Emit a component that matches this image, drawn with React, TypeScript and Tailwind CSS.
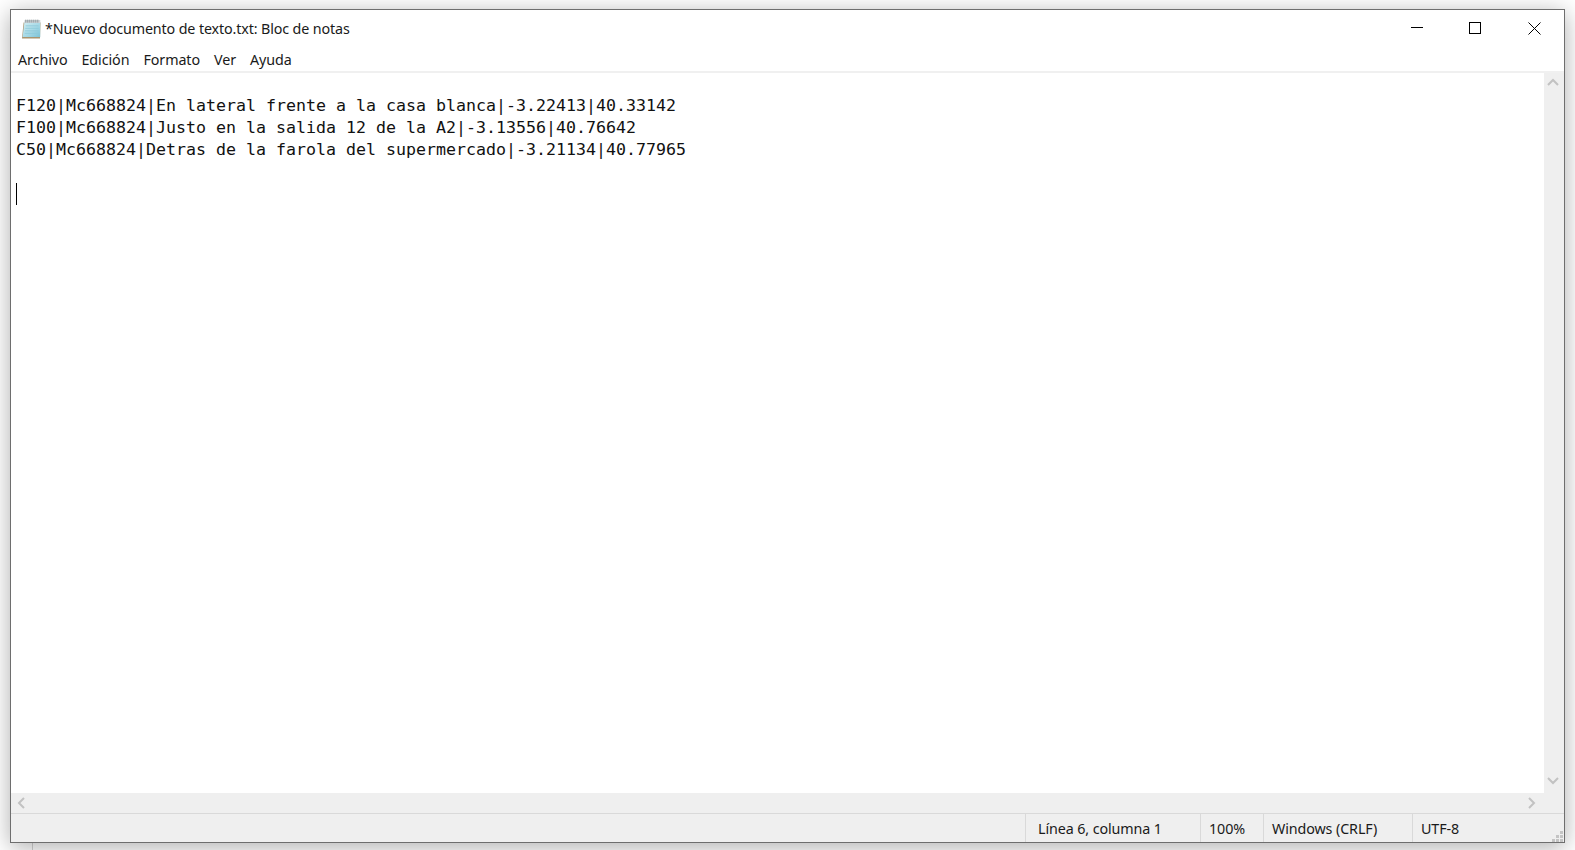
const ui = "font-['Noto_Sans','Open_Sans',sans-serif]";

const lines = [
  "",
  "F120|Mc668824|En lateral frente a la casa blanca|-3.22413|40.33142",
  "F100|Mc668824|Justo en la salida 12 de la A2|-3.13556|40.76642",
  "C50|Mc668824|Detras de la farola del supermercado|-3.21134|40.77965",
  "",
];

const menu = ["Archivo", "Edición", "Formato", "Ver", "Ayuda"];

const NotepadIcon = () => (
  <svg width="20" height="20" viewBox="0 0 20 20">
    <defs>
      <linearGradient id="page" x1="0" y1="0" x2="1" y2="1">
        <stop offset="0" stopColor="#d3eef3" />
        <stop offset="0.55" stopColor="#a6d9e6" />
        <stop offset="1" stopColor="#7cc3d6" />
      </linearGradient>
    </defs>
    <path d="M2.6 3.5H19.5L19 19.5H1z" fill="#a8946f" />
    <path d="M3.4 3H19.2V18H1.6z" fill="url(#page)" />
    <path d="M4.6 6.8h13M4.3 9.3h13.3M4 11.8h13.6M3.7 14.3h13.9" stroke="#8cc8d8" strokeWidth="0.8" />
    <path d="M3.6 1H19.3V4H3.3z" fill="#cfd6d9" />
    <path
      d="M4.8 0.6v3M6.8 0.6v3M8.8 0.6v3M10.8 0.6v3M12.8 0.6v3M14.8 0.6v3M16.8 0.6v3"
      stroke="#7d898e"
      strokeWidth="0.8"
    />
  </svg>
);

const Chevron = ({ d }: { d: string }) => (
  <svg width="12" height="12" viewBox="0 0 12 12" className="text-[#c2c2c2]">
    <path d={d} fill="none" stroke="currentColor" strokeWidth="2" />
  </svg>
);

const Grip = () => (
  <svg width="12" height="12" viewBox="0 0 12 12" className="absolute bottom-0 right-0">
    <path
      d="M8 1h3v3H8zM4 5h3v3H4zM8 5h3v3H8zM0 9h3v3H0zM4 9h3v3H4zM8 9h3v3H8z"
      fill="#c4c4c4"
    />
  </svg>
);

const StatusCell = ({ text, className }: { text: string; className: string }) => (
  <div className={`flex h-full items-center border-l border-[#d9d9d9] pl-2 pt-[2px] ${className}`}>{text}</div>
);

export default function App() {
  return (
    <div className="relative h-[850px] w-[1575px] overflow-hidden bg-white pl-[10px] pt-[9px]">
      {/* edge of whatever sits behind the window */}
      <div className="absolute bottom-0 left-[32px] h-[8px] w-px bg-[#d4d4d4]" />
      <div
        className={`relative flex h-[834px] w-[1555px] flex-col border border-[#6e6e6e] bg-white text-[14.3px] text-[#1a1a1a] shadow-[0_4px_22px_rgba(0,0,0,0.32)] ${ui}`}
      >
        <div className="flex h-[38px] items-center">
          <div className="ml-[10px] mr-[4px] flex">
            <NotepadIcon />
          </div>
          <span className="flex-1 tracking-[-0.13px]">*Nuevo documento de texto.txt: Bloc de notas</span>
          <div className="flex h-full pb-[2px]">
            <button className="flex w-[59px] items-center justify-center">
              <svg width="12" height="12" viewBox="0 0 12 12">
                <path d="M0 5.5h12" stroke="#000" />
              </svg>
            </button>
            <button className="flex w-[59px] items-center justify-center pr-[2px]">
              <svg width="12" height="12" viewBox="0 0 12 12">
                <rect x="0.5" y="0.5" width="11" height="11" fill="none" stroke="#000" />
              </svg>
            </button>
            <button className="flex w-[59px] items-center justify-center">
              <svg width="13" height="13" viewBox="0 0 13 13">
                <path d="M0.5 0.5l12 12M12.5 0.5l-12 12" stroke="#000" />
              </svg>
            </button>
          </div>
        </div>

        <div className="box-content flex h-[23px] items-center gap-[14px] border-b-2 border-[#f0f0f0] pl-[7px] tracking-[-0.08px]">
          {menu.map((item) => (
            <span key={item}>{item}</span>
          ))}
        </div>

        <div className="flex min-h-0 flex-1">
          <div className="relative flex-1 overflow-hidden pl-[5px] font-['DejaVu_Sans_Mono',monospace] text-[16.62px] leading-[22px] text-[#111]">
            {lines.map((line, i) => (
              <div key={i} className="h-[22px] whitespace-pre">
                {line}
              </div>
            ))}
            <div className="h-[22px] w-px bg-black" />
          </div>
          <div className="flex w-[20px] flex-col items-center justify-between bg-[#efefef] pb-[7px] pl-0 pr-[2px] pt-[4px]">
            <Chevron d="M1 8l5-5 5 5" />
            <Chevron d="M1 4l5 5 5-5" />
          </div>
        </div>

        <div className="flex h-[20px] items-center justify-between bg-[#efefef] pl-[5px] pr-[27px]">
          <Chevron d="M8 1L3 6l5 5" />
          <Chevron d="M4 1l5 5-5 5" />
        </div>

        <div className="relative flex h-[29px] border-t border-[#d9d9d9] bg-[#efefef] pl-[1014px]">
          <div className="flex h-full w-full items-center tracking-[-0.1px]">
            <StatusCell text="Línea 6, columna 1" className="w-[175px] pl-[12px]" />
            <StatusCell text="100%" className="w-[63px]" />
            <StatusCell text="Windows (CRLF)" className="w-[149px]" />
            <StatusCell text="UTF-8" className="flex-1" />
          </div>
          <Grip />
        </div>
      </div>
    </div>
  );
}
